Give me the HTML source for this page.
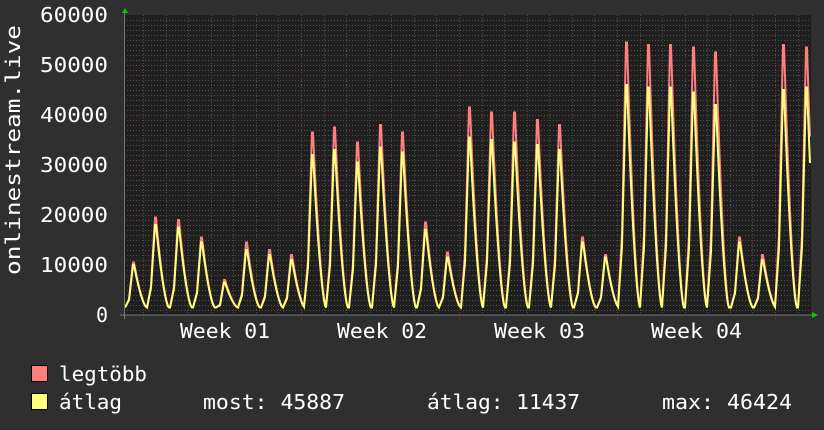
<!DOCTYPE html>
<html><head><meta charset="utf-8"><style>
html,body{margin:0;padding:0;background:#2f2f2f;width:824px;height:430px;overflow:hidden}
svg{display:block}
text{font-family:"DejaVu Sans Mono","Liberation Mono",monospace;fill:#fff;font-size:20px}
</style></head><body>
<svg id="s" width="824" height="430" xmlns="http://www.w3.org/2000/svg">
<rect width="824" height="430" fill="#2f2f2f"/>
<rect x="124" y="15" width="687" height="300" fill="#1f1f1f"/>
<g id="grid"></g>
<path id="mx" fill="none" stroke="#ff7f7f" stroke-width="2"/>
<path id="av" fill="none" stroke="#ffff7f" stroke-width="2"/>
<line x1="120" y1="315" x2="815" y2="315" stroke="#777" stroke-width="1"/>
<line x1="124.5" y1="12" x2="124.5" y2="319" stroke="#777" stroke-width="1"/>
<polygon points="122,13 128,13 125,8" fill="#00cc00"/>
<polygon points="812,312 812,318 818,315" fill="#00cc00"/>
<g text-anchor="end">
<text x="108" y="22" textLength="68" lengthAdjust="spacingAndGlyphs">60000</text>
<text x="108" y="72" textLength="68" lengthAdjust="spacingAndGlyphs">50000</text>
<text x="108" y="122" textLength="68" lengthAdjust="spacingAndGlyphs">40000</text>
<text x="108" y="172" textLength="68" lengthAdjust="spacingAndGlyphs">30000</text>
<text x="108" y="222" textLength="68" lengthAdjust="spacingAndGlyphs">20000</text>
<text x="108" y="272" textLength="68" lengthAdjust="spacingAndGlyphs">10000</text>
<text x="108" y="322">0</text>
</g>
<text transform="translate(20,275) rotate(-90)" textLength="250" lengthAdjust="spacingAndGlyphs">onlinestream.live</text>
<text x="180" y="338" textLength="90" lengthAdjust="spacingAndGlyphs">Week 01</text>
<text x="337" y="338" textLength="90" lengthAdjust="spacingAndGlyphs">Week 02</text>
<text x="494" y="338" textLength="91" lengthAdjust="spacingAndGlyphs">Week 03</text>
<text x="651" y="338" textLength="91" lengthAdjust="spacingAndGlyphs">Week 04</text>
<rect x="31.5" y="365.5" width="16" height="16" fill="#ff7f7f" stroke="#000"/>
<rect x="31.5" y="393.5" width="16" height="16" fill="#ffff7f" stroke="#000"/>
<text x="59" y="381" textLength="88" lengthAdjust="spacingAndGlyphs">legtöbb</text>
<text x="59" y="409" textLength="63" lengthAdjust="spacingAndGlyphs">átlag</text>
<text x="203" y="409" textLength="142" lengthAdjust="spacingAndGlyphs">most: 45887</text>
<text x="427" y="409" textLength="153" lengthAdjust="spacingAndGlyphs">átlag: 11437</text>
<text x="662" y="409" textLength="130" lengthAdjust="spacingAndGlyphs">max: 46424</text>
</svg>
<script>
var g=document.getElementById('grid'),h='';
for(var v=1;v<60;v++){var y=315-v*5;var maj=v%10==0;
h+='<line x1="124" x2="811" y1="'+(y+.5)+'" y2="'+(y+.5)+'" stroke="'+(maj?'#7a4040':'#505050')+'" stroke-dasharray="1,2"/>';}
for(var k=-1;k<32;k++){var x=143+k*22.57;if(x<125||x>811)continue;var maj=(k%7==0);
x=Math.round(x)+.5;
h+='<line y1="15" y2="'+(maj?319:315)+'" x1="'+x+'" x2="'+x+'" stroke="'+(maj?'#7a4040':'#505050')+'" stroke-dasharray="1,2"/>';}
g.innerHTML=h;
var P=[[133,10500,10000],[155,19500,18000],[178,19000,17500],[201,15500,14500],[224,7000,6500],[246,14500,13000],[269,13000,12000],[291,12000,11000],[312,36500,32000],[334,37500,33000],[357,34500,30500],[380,38000,33500],[402,36500,32500],[425,18500,17000],[447,12500,11500],[469,41500,35500],[491,40500,35000],[514,40500,34500],[537,39000,34000],[559,38000,33000],[582,15500,14500],[605,12000,11500],[626,54500,46000],[648,54000,45500],[670,54000,45500],[693,53500,44500],[715,52500,42000],[739,15500,14500],[762,12000,11000],[783,54000,45000],[806,53500,45500]];
function val(x,i){var b=1500,m=b;for(var j=0;j<P.length;j++){var p=P[j][0],V=P[j][i],t;
if(x<=p-4&&x>=p-8){t=(x-(p-8))/4;t=b+(0.3*V-b)*t;}
else if(x>p-4&&x<=p){t=0.3*V+0.7*V*((x-(p-4))/4);}
else if(x>p&&x<=p+1){t=V;}
else if(x>p+1&&x<=p+14){var d=(x-p-1)/13;t=b+(V-b)*Math.pow(1-d,1.6);}
else continue; if(t>m)m=t;}return m;}
function path(i){var d='';for(var x=125;x<=810;x++){var y=315-val(x,i)/200;d+=(x==125?'M':'L')+x+','+y.toFixed(1);}return d;}
document.getElementById('mx').setAttribute('d',path(1));
document.getElementById('av').setAttribute('d',path(2));
</script>
</body></html>
